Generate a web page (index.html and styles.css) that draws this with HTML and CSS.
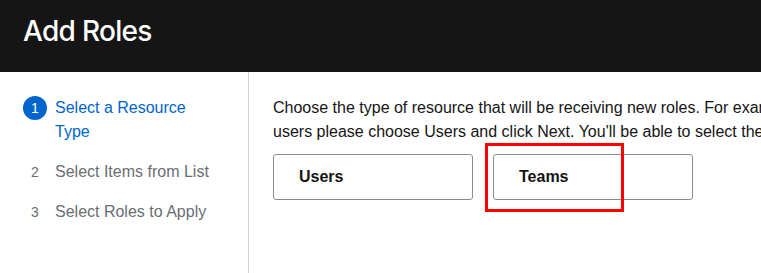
FILE: index.html
```html
<!DOCTYPE html>
<html lang="en">
<head>
    <meta charset="UTF-8">
    <meta name="viewport" content="width=device-width, initial-scale=1.0">
    <title>Add Roles</title>
    <link rel="stylesheet" href="styles.css">
</head>
<body>
    <div class="page">
        <header class="modal-header">
            <h1>Add Roles</h1>
        </header>

        <div class="wizard">
            <!-- Passi del wizard -->
            <nav class="wizard-nav">
                <ol class="steps">
                    <li class="step current">
                        <span class="step-num">1</span>
                        <span class="step-label">Select a Resource Type</span>
                    </li>
                    <li class="step">
                        <span class="step-num">2</span>
                        <span class="step-label">Select Items from List</span>
                    </li>
                    <li class="step">
                        <span class="step-num">3</span>
                        <span class="step-label">Select Roles to Apply</span>
                    </li>
                </ol>
            </nav>

            <main class="wizard-body">
                <p class="intro">Choose the type of resource that will be receiving new roles. For example, if you'd like to add new roles to a set of users please choose Users and click Next. You'll be able to select the specific resources in the next step.</p>

                <div class="resource-cards">
                    <button type="button" class="resource-card">Users</button>
                    <button type="button" class="resource-card highlighted">
                        Teams
                        <span class="highlight-box"></span>
                    </button>
                </div>
            </main>
        </div>
    </div>
</body>
</html>
```

FILE: styles.css
```css
body {
    margin: 0;
    overflow: hidden;
    background-color: #ffffff;
    font-family: "Liberation Sans", Arial, sans-serif;
}
.page {
    width: 1280px;
}
.modal-header {
    height: 72px;
    background-color: #151515;
    padding: 0 23px;
    box-sizing: border-box;
    display: flex;
    align-items: center;
}
.modal-header h1 {
    margin: 0 0 10px 0;
    font-family: Inter, "Open Sans", sans-serif;
    font-weight: 500;
    font-size: 28px;
    letter-spacing: -0.7px;
    color: #ffffff;
}
.wizard {
    display: flex;
    min-height: 201px;
}
.wizard-nav {
    flex: 0 0 249px;
    border-right: 1px solid #d2d2d2;
    padding: 24px 26px 0 23px;
    box-sizing: border-box;
}
.steps {
    list-style: none;
    margin: 0;
    padding: 0;
    display: flex;
    flex-direction: column;
    gap: 16px;
}
.step {
    display: flex;
    gap: 8px;
    font-size: 16px;
    line-height: 24px;
    color: #6a6e73;
}
.step-num {
    flex: 0 0 24px;
    height: 24px;
    font-size: 14px;
    text-align: center;
    line-height: 24px;
}
.step.current {
    color: #0066cc;
}
.step.current .step-num {
    background-color: #0066cc;
    color: #ffffff;
    border-radius: 50%;
}
.wizard-body {
    padding: 24px 24px 0 24px;
}
.intro {
    margin: 0 0 10px 0;
    max-width: 815px;
    font-size: 16px;
    line-height: 24px;
    color: #151515;
}
.resource-cards {
    display: flex;
    gap: 20px;
}
.resource-card {
    position: relative;
    width: 200px;
    height: 46px;
    padding: 0 0 0 25px;
    text-align: left;
    font-family: "Liberation Sans", Arial, sans-serif;
    font-size: 16px;
    font-weight: bold;
    color: #151515;
    background-color: #ffffff;
    border: 1px solid #8a8d90;
    border-radius: 3px;
    cursor: pointer;
}
.highlight-box {
    position: absolute;
    top: -12px;
    left: -9px;
    width: 139px;
    height: 69px;
    box-sizing: border-box;
    border: 3px solid #ff0000;
}
```
